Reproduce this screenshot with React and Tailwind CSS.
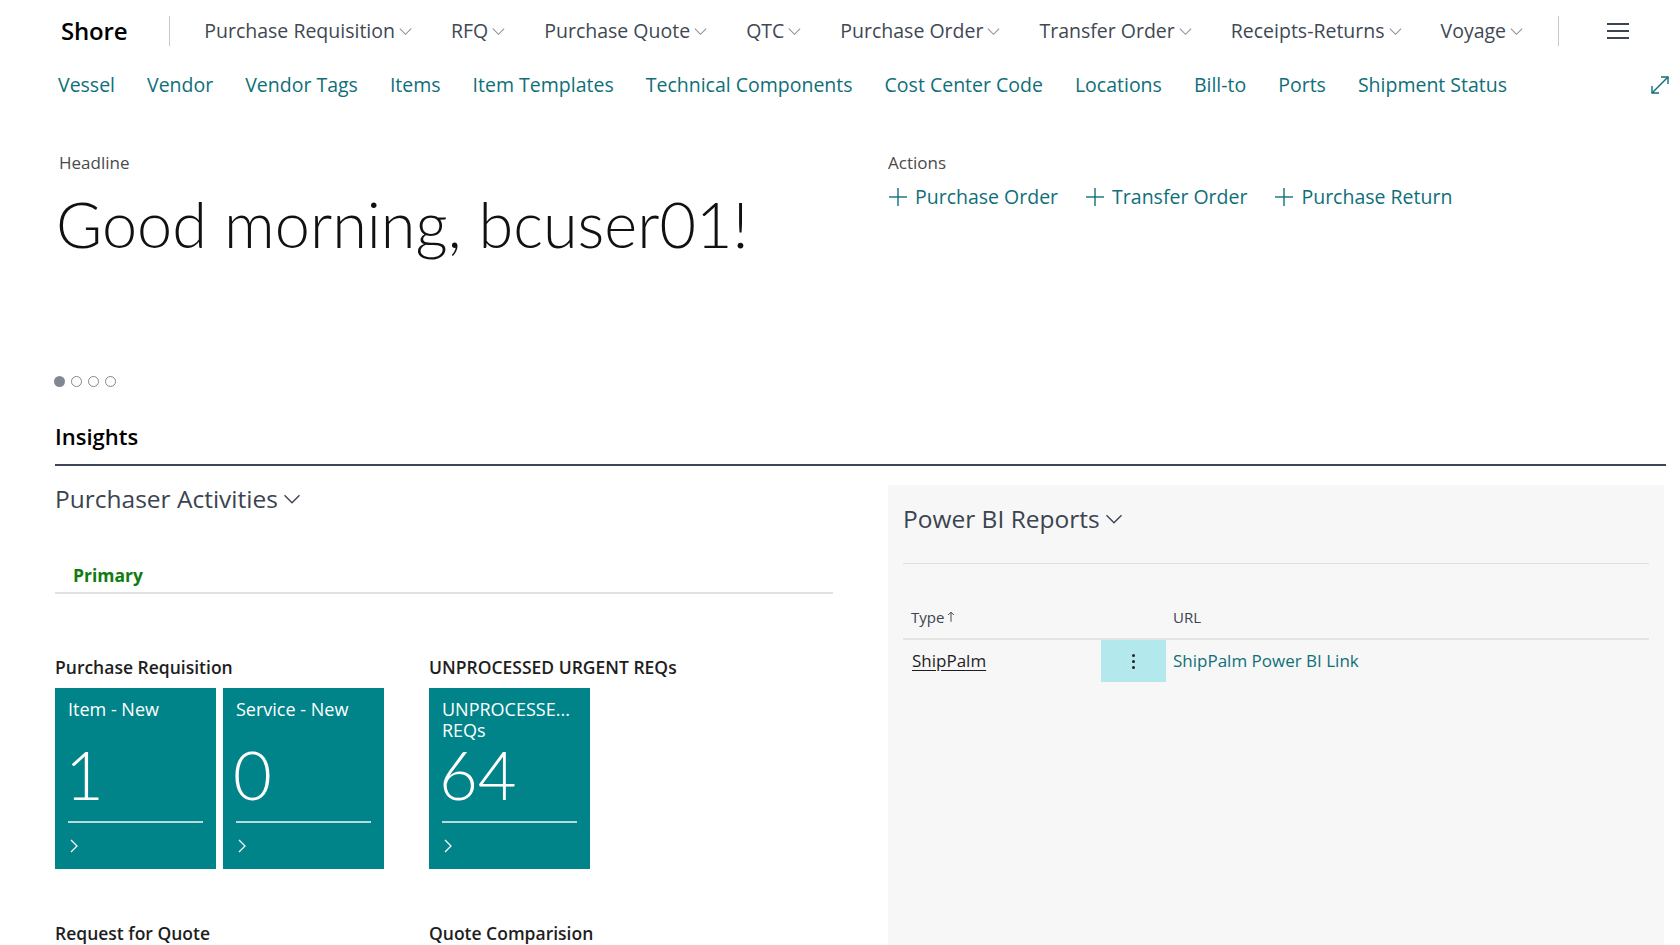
import React from "react";

const Chevron = ({ className = "" }) => (
  <svg viewBox="0 0 16 16" className={className} fill="none" stroke="currentColor" strokeWidth="1.1">
    <polyline points="2,5 8,11 14,5" />
  </svg>
);

const RightChev = () => (
  <svg viewBox="0 0 12 16" className="w-[12px] h-[16px]" fill="none" stroke="white" strokeWidth="1.3">
    <polyline points="3,2 9,8 3,14" />
  </svg>
);

const Plus = () => (
  <svg viewBox="0 0 20 20" className="w-[20px] h-[20px]" fill="none" stroke="#0f6f79" strokeWidth="1.4">
    <line x1="10" y1="1" x2="10" y2="19" />
    <line x1="1" y1="10" x2="19" y2="10" />
  </svg>
);

const navItems = [
  "Purchase Requisition",
  "RFQ",
  "Purchase Quote",
  "QTC",
  "Purchase Order",
  "Transfer Order",
  "Receipts-Returns",
  "Voyage",
];

const links = [
  "Vessel",
  "Vendor",
  "Vendor Tags",
  "Items",
  "Item Templates",
  "Technical Components",
  "Cost Center Code",
  "Locations",
  "Bill-to",
  "Ports",
  "Shipment Status",
];

const Tile = ({ title, value }) => (
  <div className="w-[161px] h-[181px] bg-[#008489] flex flex-col px-[13px] pt-[11px] text-white">
    <div className="text-[18px] leading-[21px] h-[42px]">{title}</div>
    <div className="text-[67px] font-['Lato',sans-serif] font-light leading-[66px] h-[70px] ml-[-3px]">{value}</div>
    <div className="h-[2px] bg-[#b8d9db] mt-[10px]" />
    <div className="mt-[15px]">
      <RightChev />
    </div>
  </div>
);

export default function App() {
  return (
    <div className="w-[1680px] h-[945px] overflow-hidden bg-white font-['Open_Sans',sans-serif] text-[#212121]">
      {/* top bar */}
      <div className="h-[62px] flex items-center pl-[61px] pr-[51px]">
        <div className="text-[24px] font-semibold text-black tracking-[-0.2px]">Shore</div>
        <div className="w-[1px] h-[30px] bg-[#c8c8c8] ml-[42px] mr-[34px]" />
        <div className="flex items-center gap-[38px] text-[19.5px] text-[#404853]">
          {navItems.map((n) => (
            <div key={n} className="flex items-center gap-[3px]">
              <span>{n}</span>
              <Chevron className="w-[15px] h-[15px] text-[#8a8f96]" />
            </div>
          ))}
        </div>
        <div className="w-[1px] h-[30px] bg-[#c8c8c8] ml-[34px]" />
        <div className="ml-auto flex flex-col gap-[5px] w-[22px]">
          <div className="h-[2px] bg-[#3b4450]" />
          <div className="h-[2px] bg-[#3b4450]" />
          <div className="h-[2px] bg-[#3b4450]" />
        </div>
      </div>

      {/* second row links */}
      <div className="h-[46px] flex items-center pl-[58px] pr-[10px]">
        <div className="flex items-center gap-[32px] text-[19.5px] text-[#0f6f79]">
          {links.map((l) => (
            <span key={l}>{l}</span>
          ))}
        </div>
        <svg viewBox="0 0 20 20" className="ml-auto w-[20px] h-[20px]" fill="none" stroke="#0f6f79" strokeWidth="1.4">
          <line x1="2" y1="18" x2="18" y2="2" />
          <polyline points="2,11 2,18 9,18" />
          <polyline points="11,2 18,2 18,9" />
        </svg>
      </div>

      {/* headline + actions */}
      <div className="flex pl-[56px] mt-[43px]">
        <div className="w-[832px] flex flex-col">
          <div className="text-[17px] text-[#4a4a4a] pl-[3px] leading-[24px]">Headline</div>
          <div className="text-[63px] font-['Lato',sans-serif] font-light text-[#111] leading-[80px] mt-[9px]">
            Good morning, bcuser01!
          </div>
          <div className="flex gap-[6px] mt-[112px] ml-[-2px]">
            <div className="w-[11px] h-[11px] rounded-full bg-[#808894]" />
            <div className="w-[11px] h-[11px] rounded-full border border-[#808894]" />
            <div className="w-[11px] h-[11px] rounded-full border border-[#808894]" />
            <div className="w-[11px] h-[11px] rounded-full border border-[#808894]" />
          </div>
        </div>
        <div className="flex flex-col">
          <div className="text-[17px] text-[#4a4a4a] leading-[24px]">Actions</div>
          <div className="flex gap-[27px] mt-[9px] text-[19.5px] text-[#0f6f79] leading-[26px]">
            <div className="flex items-center gap-[7px]"><Plus />Purchase Order</div>
            <div className="flex items-center gap-[7px]"><Plus />Transfer Order</div>
            <div className="flex items-center gap-[7px]"><Plus />Purchase Return</div>
          </div>
        </div>
      </div>

      {/* insights */}
      <div className="pl-[55px] pr-[14px] mt-[34px]">
        <div className="text-[22px] font-semibold text-black leading-[30px]">Insights</div>
        <div className="h-[2px] bg-[#3b4759] mt-[13px]" />
      </div>

      <div className="flex pl-[55px] pr-[16px]">
        {/* left */}
        <div className="w-[778px] flex flex-col">
          <div className="flex items-center gap-[4px] mt-[16px] text-[24.5px] text-[#3b4450] leading-[34px]">
            <span>Purchaser Activities</span>
            <Chevron className="w-[20px] h-[20px] text-[#3b4450]" />
          </div>
          <div className="mt-[46px] pl-[18px] text-[17.5px] font-bold text-[#107c10] leading-[26px]">Primary</div>
          <div className="h-[2px] bg-[#e1e1e1] mt-[4px]" />

          <div className="flex gap-[45px] mt-[61px]">
            <div className="flex flex-col">
              <div className="text-[17.5px] font-semibold text-[#1e1e1e] leading-[24px]">Purchase Requisition</div>
              <div className="flex gap-[7px] mt-[9px]">
                <Tile title="Item - New" value="1" />
                <Tile title="Service - New" value="0" />
              </div>
            </div>
            <div className="flex flex-col">
              <div className="text-[17.5px] font-semibold text-[#1e1e1e] leading-[24px]">UNPROCESSED URGENT REQs</div>
              <div className="flex gap-[7px] mt-[9px]">
                <Tile title={<>UNPROCESSE...<br />REQs</>} value="64" />
              </div>
            </div>
          </div>

          <div className="flex mt-[52px]">
            <div className="w-[374px] text-[17.5px] font-semibold text-[#1e1e1e] leading-[24px]">Request for Quote</div>
            <div className="text-[17.5px] font-semibold text-[#1e1e1e] leading-[24px]">Quote Comparision</div>
          </div>
        </div>

        {/* right panel */}
        <div className="ml-[55px] mt-[19px] w-[776px] h-[500px] bg-[#f7f7f8] px-[15px] flex flex-col">
          <div className="flex items-center gap-[4px] mt-[17px] text-[24.5px] text-[#3b4450] leading-[34px]">
            <span>Power BI Reports</span>
            <Chevron className="w-[20px] h-[20px] text-[#3b4450]" />
          </div>
          <div className="h-[1px] bg-[#dedede] mt-[27px]" />
          <div className="flex items-center h-[42px] mt-[32px] text-[15px] text-[#3b4450]">
            <div className="w-[262px] pl-[8px] flex items-center gap-[3px]">
              <span>Type</span>
              <svg viewBox="0 0 10 14" className="w-[8px] h-[12px]" fill="none" stroke="#3b4450" strokeWidth="1.2">
                <line x1="5" y1="1" x2="5" y2="13" />
                <polyline points="1.5,4.5 5,1 8.5,4.5" />
              </svg>
            </div>
            <div className="pl-[8px]">URL</div>
          </div>
          <div className="h-[2px] bg-[#e4e4e4]" />
          <div className="flex items-stretch h-[42px]">
            <div className="w-[198px] pl-[9px] flex items-center text-[17px] text-[#1e1e1e] underline underline-offset-[3px]">
              ShipPalm
            </div>
            <div className="w-[65px] bg-[#b3e8ec] flex flex-col items-center justify-center gap-[3px]">
              <div className="w-[3px] h-[3px] rounded-full bg-[#222]" />
              <div className="w-[3px] h-[3px] rounded-full bg-[#222]" />
              <div className="w-[3px] h-[3px] rounded-full bg-[#222]" />
            </div>
            <div className="pl-[7px] flex items-center text-[17px] text-[#0f6f79]">ShipPalm Power BI Link</div>
          </div>
        </div>
      </div>
    </div>
  );
}
